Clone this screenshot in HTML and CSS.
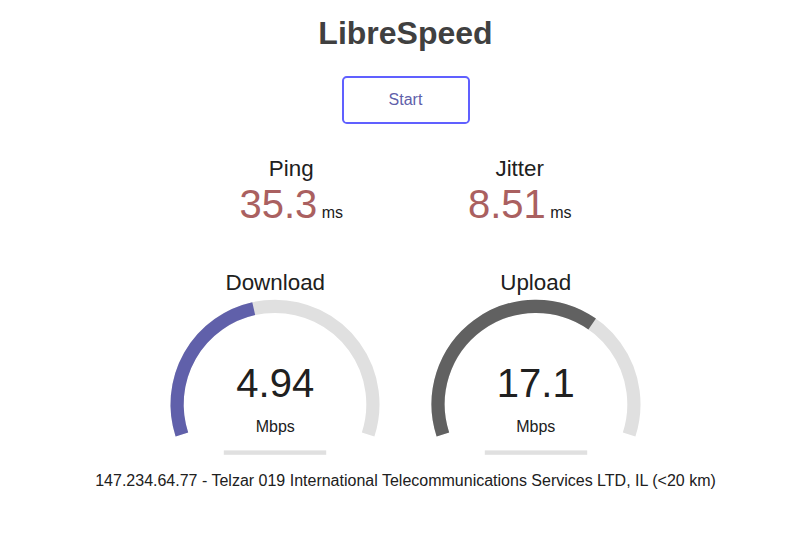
FILE: index.html
```html
<!DOCTYPE html>
<html lang="en">
<head>
  <meta charset="UTF-8" />
  <meta name="viewport" content="width=device-width, initial-scale=1.0" />
  <title>LibreSpeed</title>
  <link rel="stylesheet" href="styles.css">
</head>
<body>
  <h1>LibreSpeed</h1>
  <button id="startStopBtn" type="button">Start</button>

  <div id="test">
    <div class="testGroup">
      <div class="testArea2">
        <div class="testName">Ping</div>
        <div class="meterText pingColor">35.3</div>
        <div class="unit">ms</div>
      </div>
      <div class="testArea2">
        <div class="testName">Jitter</div>
        <div class="meterText pingColor">8.51</div>
        <div class="unit">ms</div>
      </div>
    </div>

    <div class="testGroup">
      <div class="testArea">
        <svg class="meter" viewBox="0 0 256 200" width="256" height="200">
          <path class="meterBk" d="M34.89 166.45 A97.9 97.9 0 1 1 221.11 166.45" />
          <path class="meterFg dlColor" d="M34.89 166.45 A97.9 97.9 0 0 1 106.73 40.64" />
          <rect class="meterProg" x="76.8" y="182.4" width="102.4" height="4.4" />
        </svg>
        <div class="meterLabels">
          <div class="testName">Download</div>
          <div class="meterText">4.94</div>
          <div class="unit">Mbps</div>
        </div>
      </div>
      <div class="testArea">
        <svg class="meter" viewBox="0 0 256 200" width="256" height="200">
          <path class="meterBk" d="M34.89 166.45 A97.9 97.9 0 1 1 221.11 166.45" />
          <path class="meterFg ulColor" d="M34.89 166.45 A97.9 97.9 0 0 1 184.17 56.01" />
          <rect class="meterProg" x="76.8" y="182.4" width="102.4" height="4.4" />
        </svg>
        <div class="meterLabels">
          <div class="testName">Upload</div>
          <div class="meterText">17.1</div>
          <div class="unit">Mbps</div>
        </div>
      </div>
    </div>

    <div id="ipArea">
      <span id="ip">147.234.64.77 - Telzar 019 International Telecommunications Services LTD, IL (&lt;20 km)</span>
    </div>
  </div>
</body>
</html>
```

FILE: styles.css
```css
html, body {
  border: none;
  padding: 0;
  margin: 0;
  background: #FFFFFF;
  color: #202020;
}

body {
  text-align: center;
  font-family: "Liberation Sans", Arial, sans-serif;
  font-size: 16px;
  padding-left: 7px;
}

h1 {
  color: #404040;
  font-size: 32px;
  line-height: 37px;
  margin: 15px 0 24px;
}

#startStopBtn {
  display: inline-block;
  margin: 0 auto;
  color: #6060AA;
  background-color: transparent;
  border: 0.15em solid #6060FF;
  border-radius: 0.3em;
  box-sizing: border-box;
  width: 8em;
  height: 3em;
  line-height: 2.7em;
  padding: 0;
  font-family: inherit;
  font-size: 16px;
  cursor: pointer;
}

#test {
  margin-top: 32px;
}

.testGroup {
  display: block;
  margin: 0 auto;
}

.testArea2 {
  display: inline-block;
  vertical-align: top;
  width: 14em;
  height: 7em;
  text-align: center;
}

.testArea2 .testName {
  padding-top: 3px;
  margin-bottom: 2px;
  font-size: 1.4em;
  line-height: 20px;
}

.testArea2 .meterText {
  display: inline-block;
  font-size: 2.5em;
  line-height: 46px;
}

.testArea2 .unit {
  display: inline-block;
}

.pingColor {
  color: #AA6060;
}

.testArea {
  display: inline-grid;
  vertical-align: top;
  width: 16em;
  height: 200px;
}

.testArea > * {
  grid-area: 1 / 1;
}

.meter {
  display: block;
}

.meterBk,
.meterFg {
  fill: none;
  stroke-width: 13.2;
}

.meterBk {
  stroke: #E0E0E0;
}

.dlColor {
  stroke: #6060AA;
}

.ulColor {
  stroke: #616161;
}

.meterProg {
  fill: #E0E0E0;
}

.meterLabels .testName {
  padding-top: 2px;
  font-size: 1.4em;
  line-height: 26px;
}

.meterLabels .meterText {
  margin-top: 64px;
  font-size: 2.5em;
  line-height: 46px;
}

.meterLabels .unit {
  margin-top: 12px;
  line-height: 18px;
}

#ipArea {
  margin-top: 4px;
  line-height: 18px;
}
```
